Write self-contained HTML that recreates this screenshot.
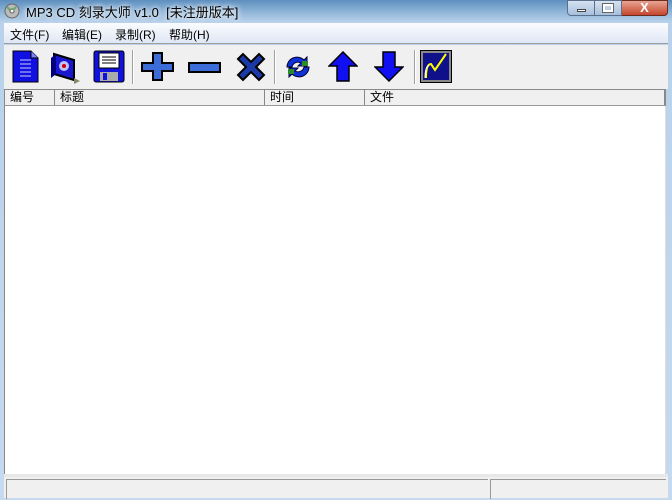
<!DOCTYPE html>
<html><head><meta charset="utf-8"><style>
*{margin:0;padding:0;box-sizing:border-box}
body{width:672px;height:500px;overflow:hidden;font-family:"Liberation Sans","Noto Sans CJK SC",sans-serif;font-size:12px;position:relative;background:linear-gradient(180deg,#5d8fbf 0,#8fb5d8 12px,#b9d1ea 22px,#c5daef 100%)}
.abs{position:absolute}
.title{left:26px;top:2px;font-size:13px;color:#000;text-shadow:0 0 6px #fff,0 0 6px #fff}
.menu{left:4px;top:23px;width:664px;height:21px;background:linear-gradient(#fbfcfe,#dfe8f5);border-bottom:1px solid #a0a0a0}
.menu span{position:absolute;top:3px;font-size:12px}
.tool{left:4px;top:45px;width:664px;height:44px;background:#f0f0f0}
.sep{position:absolute;top:5px;width:2px;height:34px;border-left:1px solid #a0a0a0;border-right:1px solid #fff}
.hdr{left:4px;top:89px;width:662px;height:17px;background:#f0f0f0;border:1px solid #888;border-bottom:1px solid #999}
.hdr div{position:absolute;top:0;height:15px;border-right:1px solid #888;padding-left:5px;line-height:15px;font-size:12px}
.list{left:4px;top:106px;width:662px;height:368px;background:#fff;border-left:1px solid #888;border-right:1px solid #ddd}
.status{left:4px;top:474px;width:664px;height:24px;background:#f0f0f0;border-top:3px solid #e8e8e8}
.status div{position:absolute;top:2px;height:20px;border-top:1px solid #999;border-left:1px solid #999}
</style></head><body>
<svg class="abs" style="left:4px;top:3px" width="16" height="16"><circle cx="8" cy="8" r="7" fill="#bbb" stroke="#666"/><circle cx="8" cy="8" r="2" fill="#fff" stroke="#555"/><path d="M3 4l3 3M12 4l-3 3" stroke="#6a6" stroke-width="2"/></svg>
<div class="abs title">MP3 CD 刻录大师 v1.0&nbsp; [未注册版本]</div>
<div class="abs" style="left:567px;top:0;width:28px;height:16px;background:linear-gradient(#d5e2f1,#a7bfdb);border:1px solid #5a6f8c;border-radius:0 0 0 4px"><div style="position:absolute;left:9px;top:8px;width:9px;height:3px;background:#fff;border:1px solid #444"></div></div>
<div class="abs" style="left:595px;top:0;width:27px;height:16px;background:linear-gradient(#d5e2f1,#a7bfdb);border:1px solid #5a6f8c;border-left:none"><div style="position:absolute;left:8px;top:3px;width:10px;height:8px;border:2px solid #fff;outline:1px solid #666"></div></div>
<div class="abs" style="left:622px;top:0;width:46px;height:16px;background:linear-gradient(#e8a493,#c5462c);border:1px solid #6d2a1e;border-left:none;border-radius:0 0 4px 0;color:#fff;font-weight:bold;text-align:center;font-size:13px;line-height:14px">X</div>
<div class="abs menu"><span style="left:6px">文件(F)</span><span style="left:58px">编辑(E)</span><span style="left:111px">录制(R)</span><span style="left:165px">帮助(H)</span></div>
<div class="abs tool">
<svg class="abs" style="left:8px;top:5px" width="28" height="33"><path d="M1 1h18l7 7v24H1z" fill="#1010e0" stroke="#000"/><path d="M19 1v7h7" fill="#8080ff" stroke="#000"/><path d="M8 10h11M8 14h11M8 18h11M8 22h11M8 26h11" stroke="#ccf"/></svg>
<svg class="abs" style="left:45px;top:5px" width="34" height="34"><path d="M5 4l20 6 0 20-20-6z" fill="#1818d0" stroke="#000" stroke-width="2"/><path d="M2 8l5-4v20l-5 4z" fill="#000080"/><circle cx="15" cy="16" r="5" fill="#c0c0ff"/><circle cx="15" cy="16" r="2" fill="#c00"/><path d="M25 28l6 3-6 3z" fill="#886"/></svg>
<svg class="abs" style="left:89px;top:5px" width="32" height="33"><rect x="1" y="1" width="30" height="31" rx="2" fill="#1010e0" stroke="#000"/><rect x="6" y="3" width="20" height="15" fill="#fff" stroke="#000"/><path d="M9 7h14M9 10h14M9 13h14" stroke="#000"/><rect x="7" y="22" width="18" height="9" fill="#aaa"/><rect x="10" y="23" width="4" height="7" fill="#1010e0"/></svg>
<div class="sep" style="left:128px"></div>
<svg class="abs" style="left:137px;top:7px" width="33" height="29"><path d="M12 1h9v10h11v8H21v9h-9v-9H1v-8h11z" fill="#3c6cd8" stroke="#000" stroke-width="2"/></svg>
<svg class="abs" style="left:184px;top:17px" width="33" height="11"><rect x="1" y="1" width="31" height="9" fill="#3c6cd8" stroke="#000" stroke-width="2"/></svg>
<svg class="abs" style="left:232px;top:7px" width="30" height="30"><path d="M2 7l5-5 8 8 8-8 5 5-8 8 8 8-5 5-8-8-8 8-5-5 8-8z" fill="#1a3aa8" stroke="#000" stroke-width="2"/></svg>
<div class="sep" style="left:270px"></div>
<svg class="abs" style="left:279px;top:8px" width="30" height="28"><path d="M4 14a10 10 0 0 1 17-7l3-3v9h-9l3-3a6 6 0 0 0-9 4z" fill="#1030d8" stroke="#003"/><path d="M26 14a10 10 0 0 1-17 7l-3 3v-9h9l-3 3a6 6 0 0 0 9-4z" fill="#1030d8" stroke="#003"/><rect x="19" y="8" width="6" height="5" fill="#2a8a2a"/><rect x="5" y="16" width="6" height="5" fill="#2a8a2a"/></svg>
<svg class="abs" style="left:324px;top:6px" width="30" height="31"><path d="M15 1l14 14h-8v15h-12v-15h-8z" fill="#1010f0" stroke="#000" stroke-width="1.5"/></svg>
<svg class="abs" style="left:370px;top:6px" width="30" height="31"><path d="M15 30l14-14h-8v-15h-12v15h-8z" fill="#1010f0" stroke="#000" stroke-width="1.5"/></svg>
<div class="sep" style="left:410px"></div>
<svg class="abs" style="left:416px;top:5px" width="32" height="33"><rect x="0.5" y="0.5" width="31" height="32" fill="#888" stroke="#000"/><rect x="3" y="3" width="26" height="27" fill="#10108a"/><path d="M6 28c0-10 2-14 5-14l4 6 11-16" fill="none" stroke="#ff0" stroke-width="2"/><path d="M5 28c0-8 2-12 4-13" stroke="#fff" fill="none"/></svg>
</div>
<div class="abs hdr"><div style="left:0;width:50px">编号</div><div style="left:50px;width:210px">标题</div><div style="left:260px;width:100px">时间</div><div style="left:360px;width:300px">文件</div></div>
<div class="abs list"></div>
<div class="abs status"><div style="left:2px;width:482px"></div><div style="left:486px;width:176px"></div></div>
</body></html>
